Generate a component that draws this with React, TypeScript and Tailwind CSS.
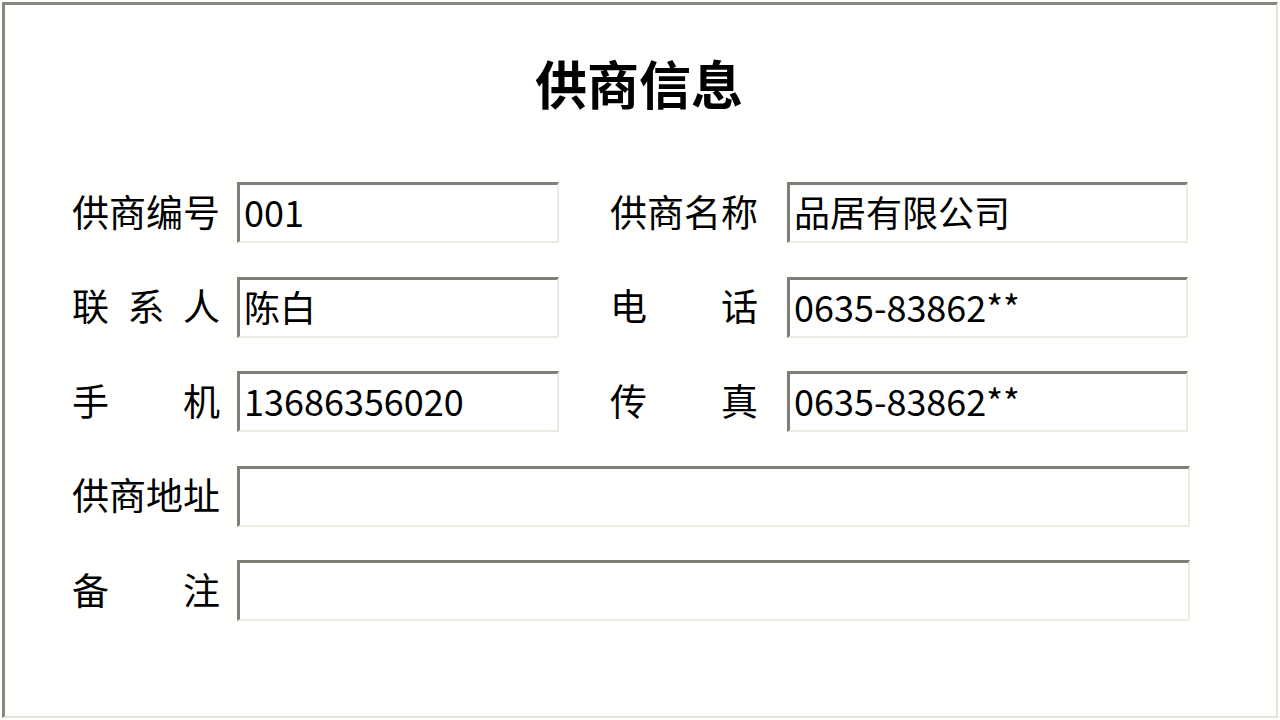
import React from "react";

const font = { fontFamily: '"Noto Sans CJK SC", "Noto Sans", sans-serif' };

function Label({ chars }: { chars: string[] }) {
  return (
    <div className="flex w-[148px] shrink-0 justify-between pb-[3px] text-[37px] leading-none text-black">
      {chars.map((c, i) => (
        <span key={i}>{c}</span>
      ))}
    </div>
  );
}

function Field({ value, w }: { value?: string; w: string }) {
  return (
    <div
      className={`${w} h-[61px] shrink-0 flex items-center bg-white border-t-[3px] border-l-[3px] border-r-2 border-b-2 border-t-[#7f7f77] border-l-[#7f7f77] border-r-[#ebebe4] border-b-[#ebebe4] pl-[4px] pb-[4px] text-[36px] leading-none text-black`}
    >
      {value}
    </div>
  );
}

export default function App() {
  return (
    <div className="w-[1280px] h-[720px] bg-white p-[2px]" style={font}>
      <div className="h-full w-full bg-[#fffffd] border-t-[3px] border-l-[3px] border-r-2 border-b-2 border-t-[#878780] border-l-[#878780] border-r-[#e4e4de] border-b-[#e4e4de] pl-[67px] pt-[52px]">
        <div className="w-[1134px] text-center text-[52px] font-bold leading-none text-black">
          供商信息
        </div>
        <div className="mt-[73px] flex flex-col gap-[33.5px]">
          <div className="flex items-center">
            <Label chars={["供", "商", "编", "号"]} />
            <div className="w-[17px]" />
            <Field w="w-[322px]" value="001" />
            <div className="w-[51px]" />
            <Label chars={["供", "商", "名", "称"]} />
            <div className="w-[29px]" />
            <Field w="w-[401px]" value="品居有限公司" />
          </div>
          <div className="flex items-center">
            <Label chars={["联", "系", "人"]} />
            <div className="w-[17px]" />
            <Field w="w-[322px]" value="陈白" />
            <div className="w-[51px]" />
            <Label chars={["电", "话"]} />
            <div className="w-[29px]" />
            <Field w="w-[401px]" value="0635-83862**" />
          </div>
          <div className="flex items-center">
            <Label chars={["手", "机"]} />
            <div className="w-[17px]" />
            <Field w="w-[322px]" value="13686356020" />
            <div className="w-[51px]" />
            <Label chars={["传", "真"]} />
            <div className="w-[29px]" />
            <Field w="w-[401px]" value="0635-83862**" />
          </div>
          <div className="flex items-center">
            <Label chars={["供", "商", "地", "址"]} />
            <div className="w-[17px]" />
            <Field w="w-[953px]" />
          </div>
          <div className="flex items-center">
            <Label chars={["备", "注"]} />
            <div className="w-[17px]" />
            <Field w="w-[953px]" />
          </div>
        </div>
      </div>
    </div>
  );
}
